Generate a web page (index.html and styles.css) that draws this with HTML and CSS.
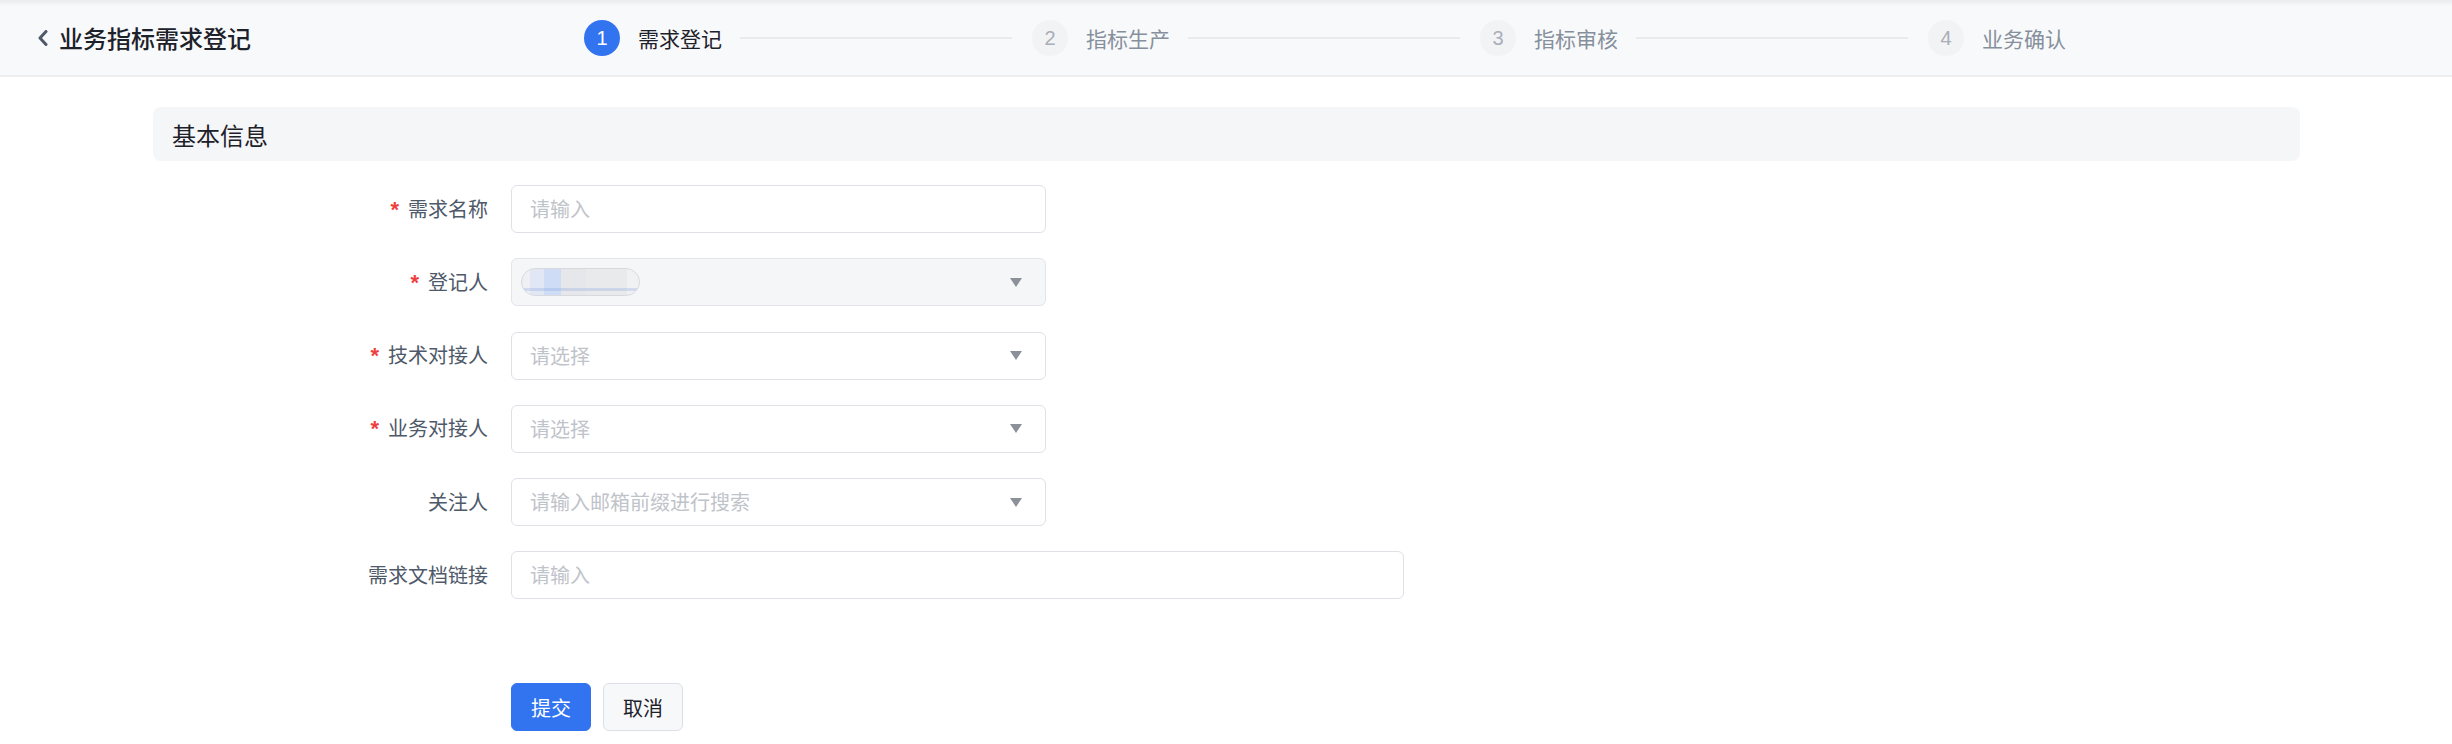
FILE: index.html
```html
<!DOCTYPE html>
<html lang="zh-CN">
<head>
<meta charset="utf-8">
<title>业务指标需求登记</title>
<link rel="stylesheet" href="styles.css">
</head>
<body>
<header class="topbar">
  <div class="back">
    <svg class="back-icon" width="12" height="16" viewBox="0 0 12 16"><path d="M9 1.5 L3 8 L9 14.5" fill="none" stroke="#4e5969" stroke-width="3" stroke-linecap="round" stroke-linejoin="round"/></svg>
    <span class="page-title">业务指标需求登记</span>
  </div>
  <ol class="steps">
    <li class="step active"><span class="step-num">1</span><span class="step-text">需求登记</span><span class="step-line"></span></li>
    <li class="step"><span class="step-num">2</span><span class="step-text">指标生产</span><span class="step-line"></span></li>
    <li class="step"><span class="step-num">3</span><span class="step-text">指标审核</span><span class="step-line"></span></li>
    <li class="step last"><span class="step-num">4</span><span class="step-text">业务确认</span></li>
  </ol>
</header>

<main class="content">
  <div class="section-title">基本信息</div>
  <form class="form">
    <div class="row">
      <label class="label"><span class="req">*</span>需求名称</label>
      <div class="field input"><span class="ph">请输入</span></div>
    </div>
    <div class="row">
      <label class="label"><span class="req">*</span>登记人</label>
      <div class="field select disabled"><span class="tag"></span><span class="caret"></span></div>
    </div>
    <div class="row">
      <label class="label"><span class="req">*</span>技术对接人</label>
      <div class="field select"><span class="ph">请选择</span><span class="caret"></span></div>
    </div>
    <div class="row">
      <label class="label"><span class="req">*</span>业务对接人</label>
      <div class="field select"><span class="ph">请选择</span><span class="caret"></span></div>
    </div>
    <div class="row">
      <label class="label">关注人</label>
      <div class="field select"><span class="ph">请输入邮箱前缀进行搜索</span><span class="caret"></span></div>
    </div>
    <div class="row">
      <label class="label">需求文档链接</label>
      <div class="field input wide"><span class="ph">请输入</span></div>
    </div>
    <div class="actions">
      <button type="button" class="btn primary">提交</button>
      <button type="button" class="btn">取消</button>
    </div>
  </form>
</main>
</body>
</html>
```

FILE: styles.css
```css
* { box-sizing: border-box; }

body {
  margin: 0;
  background: #ffffff;
  font-family: "Noto Sans CJK SC", "Liberation Sans", sans-serif;
  color: #1d2129;
}

.topbar {
  height: 77px;
  display: flex;
  align-items: center;
  padding: 0 386px 0 37px;
  background: linear-gradient(#e9ebee, #f8f9fb 6px);
  border-bottom: 2px solid #eceef1;
}

.back {
  display: flex;
  align-items: center;
  gap: 10px;
}

.back-icon { display: block; }

.page-title {
  font-size: 24px;
  line-height: 32px;
  font-weight: 500;
  color: #1d2129;
}

.steps {
  list-style: none;
  margin: 0 0 0 auto;
  padding: 0;
  width: 1482px;
  display: flex;
  align-items: center;
}

.step {
  flex: 1;
  display: flex;
  align-items: center;
}

.step.last { flex: none; }

.step-num {
  width: 36px;
  height: 36px;
  border-radius: 50%;
  background: #f2f3f5;
  color: #a9aeb8;
  font-family: "Liberation Sans", sans-serif;
  font-size: 20px;
  line-height: 36px;
  text-align: center;
  flex: none;
}

.step-text {
  margin-left: 18px;
  font-size: 21px;
  line-height: 30px;
  color: #86909c;
  white-space: nowrap;
}

.step-line {
  flex: 1;
  height: 2px;
  margin: 0 20px 0 18px;
  background: #e9eaee;
}

.step.active .step-num {
  background: #3273f0;
  color: #ffffff;
}

.step.active .step-text { color: #1d2129; }

.content {
  padding: 30px 152px 0 153px;
}

.section-title {
  height: 54px;
  display: flex;
  align-items: center;
  padding-left: 19px;
  background: #f5f6f8;
  border-radius: 8px;
  font-size: 24px;
  color: #1d2129;
}

.form {
  padding-top: 24px;
}

.row {
  display: flex;
  align-items: center;
  margin-bottom: 25.3px;
}

.label {
  width: 335px;
  margin-right: 23px;
  text-align: right;
  font-size: 20px;
  line-height: 30px;
  color: #4e5969;
  flex: none;
}

.req {
  color: #ee3f3f;
  font-family: "Liberation Sans", sans-serif;
  font-size: 22px;
  font-weight: 700;
  margin-right: 9px;
}

.field {
  width: 535px;
  height: 48px;
  border: 1px solid #dfe1e6;
  border-radius: 6px;
  background: #ffffff;
  display: flex;
  align-items: center;
  justify-content: space-between;
  padding: 0 23px 0 18px;
}

.field.wide { width: 893px; }

.field.disabled {
  background: #f5f6f8;
  border-color: #e3e5ea;
  padding-left: 9px;
}

.ph {
  font-size: 20px;
  line-height: 30px;
  color: #bfc3ca;
}

.caret {
  width: 0;
  height: 0;
  border-left: 6px solid transparent;
  border-right: 6px solid transparent;
  border-top: 9px solid #8c9098;
}

.tag {
  width: 119px;
  height: 28px;
  border-radius: 14px;
  border: 1px solid #d7d9de;
  background:
    linear-gradient(180deg, transparent 0 72%, rgba(120,150,220,0.25) 72% 85%, transparent 85%),
    linear-gradient(90deg, #eef0f3 0 7%, #e1e7f4 7% 19%, #cfdcf6 19% 33%, #e6e7ea 33% 55%, #e9eaec 55% 90%, #f0f1f3 90%);
  filter: blur(0.6px);
}

.actions {
  display: flex;
  gap: 12px;
  padding-left: 358px;
  margin-top: 84px;
}

.btn {
  width: 80px;
  height: 48px;
  border-radius: 6px;
  border: 1px solid #dcdfe5;
  background: #f7f8fa;
  color: #1d2129;
  font-family: "Noto Sans CJK SC", sans-serif;
  font-size: 20px;
  padding: 0;
}

.btn.primary {
  background: #3273f0;
  border-color: #3273f0;
  color: #ffffff;
}
```
